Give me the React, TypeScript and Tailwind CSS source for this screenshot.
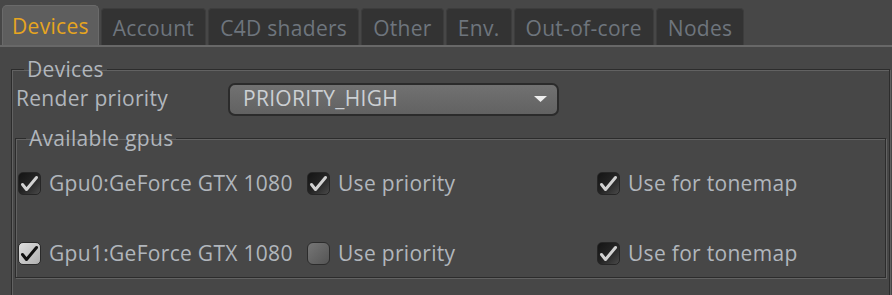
import React from "react";

const font = { fontFamily: '"Open Sans", "Noto Sans", sans-serif', letterSpacing: "0.3px" };

function Check({ kind }: { kind: "dark" | "light" | "off" }) {
  if (kind === "off") {
    return (
      <div className="w-[23px] h-[23px] rounded-[6px] border border-[#2c2c2c] bg-gradient-to-br from-[#767676] to-[#555555] shrink-0" />
    );
  }
  const dark = kind === "dark";
  return (
    <div
      className={
        dark
          ? "w-[23px] h-[23px] rounded-[5px] border border-[#262626] bg-gradient-to-br from-[#141414] via-[#242424] to-[#4a4a4a] shrink-0 flex items-center justify-center"
          : "w-[23px] h-[23px] rounded-[5px] border border-[#2a2a2a] bg-gradient-to-br from-[#e0e0e0] to-[#b0b0b0] shrink-0 flex items-center justify-center"
      }
    >
      <svg width="19" height="19" viewBox="0 0 19 19">
        <path
          d="M2.5 10.5 L6.5 15.5 L16.5 3.5"
          fill="none"
          stroke={dark ? "#d2d2d2" : "#111111"}
          strokeWidth="3"
          strokeLinecap="round"
          strokeLinejoin="round"
        />
      </svg>
    </div>
  );
}

const tabs = ["Account", "C4D shaders", "Other", "Env.", "Out-of-core", "Nodes"];

export default function App() {
  return (
    <div
      className="w-[892px] h-[295px] bg-[#474747] overflow-hidden text-[21px] text-[#b1b6bc]"
      style={font}
    >
      {/* tab bar */}
      <div className="h-[45px] flex items-end pl-[2px] gap-[2px]">
        <div className="h-[40px] px-[9px] pt-[3px] flex items-center rounded-t-[5px] bg-[#5e5e5e] border-t border-x border-[#6a6a6a] text-[#e7a520]">
          Devices
        </div>
        {tabs.map((t) => (
          <div
            key={t}
            className="h-[37px] px-[11px] pt-[3px] flex items-center rounded-t-[4px] bg-[#333333] border-t border-x border-[#3d3d3d] text-[#6e757d]"
          >
            {t}
          </div>
        ))}
      </div>
      <div className="h-[2px] bg-[#686868]" />

      {/* outer group */}
      <fieldset className="ml-[11px] mr-[2px] mt-[12px] border border-[#2c2c2c] shadow-[1px_1px_0_#626262,inset_1px_1px_0_#626262] h-[240px] px-[3px]">
        <legend className="ml-[9px] px-[3px] leading-[20px]">Devices</legend>
        <div className="flex items-center h-[32px] mt-[4px]">
          <div className="w-[213px] pl-[1px]">Render priority</div>
          <div className="w-[331px] h-[33px] rounded-[7px] border-2 border-[#2b2b2b] bg-gradient-to-b from-[#717171] to-[#626262] flex items-center justify-between pl-[13px] pr-[10px] text-[#ccd0d4]">
            <span>PRIORITY_HIGH</span>
            <svg width="13" height="6" viewBox="0 0 13 6">
              <path d="M0 0 L13 0 L6.5 6 Z" fill="#eeeeee" />
            </svg>
          </div>
        </div>

        {/* inner group */}
        <fieldset className="mt-[13px] border border-[#2c2c2c] shadow-[1px_1px_0_#626262,inset_1px_1px_0_#626262] h-[150px]">
          <legend className="ml-[10px] px-[3px] leading-[20px]">Available gpus</legend>
          <div className="grid grid-cols-[289px_290px_1fr] pl-[2px] pt-[24px] gap-y-[47px]">
            <div className="flex items-center gap-[8px] h-[23px]">
              <Check kind="dark" />
              <span>Gpu0:GeForce GTX 1080</span>
            </div>
            <div className="flex items-center gap-[8px] h-[23px]">
              <Check kind="dark" />
              <span>Use priority</span>
            </div>
            <div className="flex items-center gap-[8px] h-[23px]">
              <Check kind="dark" />
              <span>Use for tonemap</span>
            </div>
            <div className="flex items-center gap-[8px] h-[23px]">
              <Check kind="light" />
              <span>Gpu1:GeForce GTX 1080</span>
            </div>
            <div className="flex items-center gap-[8px] h-[23px]">
              <Check kind="off" />
              <span>Use priority</span>
            </div>
            <div className="flex items-center gap-[8px] h-[23px]">
              <Check kind="dark" />
              <span>Use for tonemap</span>
            </div>
          </div>
        </fieldset>
      </fieldset>
    </div>
  );
}
